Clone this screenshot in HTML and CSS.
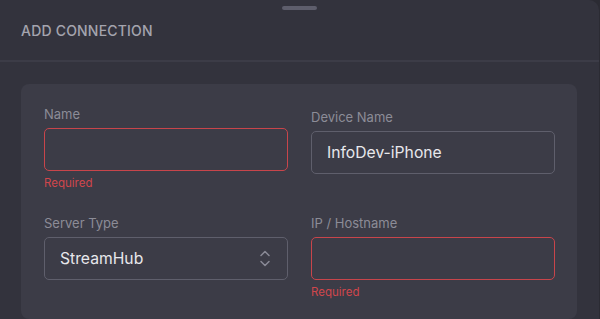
FILE: index.html
```html
<!DOCTYPE html>
<html>
<head>
<meta charset="utf-8">
<link rel="stylesheet" href="styles.css">
</head>
<body>
<div class="sheet">
  <div class="handle-bar"><span class="handle"></span></div>
  <header class="header">
    <h1 class="title">ADD CONNECTION</h1>
  </header>
  <main class="content">
    <section class="card">
      <div class="row">
        <div class="field">
          <label class="label">Name</label>
          <div class="input error"></div>
          <div class="hint">Required</div>
        </div>
        <div class="field shifted">
          <label class="label">Device Name</label>
          <div class="input"><span class="value">InfoDev-iPhone</span></div>
        </div>
      </div>
      <div class="row">
        <div class="field">
          <label class="label">Server Type</label>
          <div class="input select">
            <span class="value">StreamHub</span>
            <svg class="chev" width="12" height="17" viewBox="0 0 12 17" fill="none" stroke="currentColor" stroke-width="1.5" stroke-linecap="round" stroke-linejoin="round">
              <path d="M2 5.5 L6 1.5 L10 5.5"/>
              <path d="M2 11.5 L6 15.5 L10 11.5"/>
            </svg>
          </div>
        </div>
        <div class="field">
          <label class="label">IP / Hostname</label>
          <div class="input error"></div>
          <div class="hint">Required</div>
        </div>
      </div>
    </section>
  </main>
</div>
</body>
</html>
```

FILE: styles.css
```css
html, body {
  margin: 0;
  padding: 0;
  background: #2b2b33;
  height: 100%;
  overflow: hidden;
}
body {
  font-family: "Inter", "Noto Sans", sans-serif;
}
.sheet {
  background: #33333d;
  height: 100%;
  border-top-right-radius: 10px;
  margin-right: 1px;
  display: flex;
  flex-direction: column;
}
.handle-bar {
  display: flex;
  justify-content: center;
  padding-top: 6px;
  height: 10px;
}
.handle {
  width: 35px;
  height: 4px;
  border-radius: 2px;
  background: #5e5e6c;
}
.header {
  height: 45px;
  border-bottom: 2px solid #3c3c47;
  display: flex;
  align-items: flex-start;
  padding: 0 21px;
}
.title {
  margin: 0;
  padding-top: 6px;
  font-size: 14px;
  line-height: 18px;
  font-weight: 500;
  color: #a4a4ae;
  letter-spacing: 0.2px;
}
.content {
  padding: 22px 22px 0 21px;
}
.card {
  background: #3c3c47;
  border-radius: 8px;
  padding: 22px 23px 20px;
  display: flex;
  flex-direction: column;
  gap: 25px;
}
.row {
  display: grid;
  grid-template-columns: 244px 244px;
  column-gap: 23px;
}
.field {
  display: flex;
  flex-direction: column;
}
.field.shifted {
  padding-top: 3px;
}
.label {
  font-size: 13px;
  line-height: 16px;
  color: #8c8c97;
  margin-bottom: 6px;
  font-weight: 400;
}
.input {
  height: 41px;
  border: 1px solid #5f5f6c;
  border-radius: 5px;
  display: flex;
  align-items: center;
  padding: 0 15px;
  box-sizing: content-box;
}
.input.error {
  border-color: #c8454b;
}
.value {
  font-size: 15.7px;
  color: #e8e8ec;
}
.select {
  justify-content: space-between;
}
.chev {
  color: #8a8a96;
  margin-right: 1px;
}
.hint {
  font-size: 11.5px;
  line-height: 14px;
  color: #d0464c;
  margin-top: 5px;
}
```
